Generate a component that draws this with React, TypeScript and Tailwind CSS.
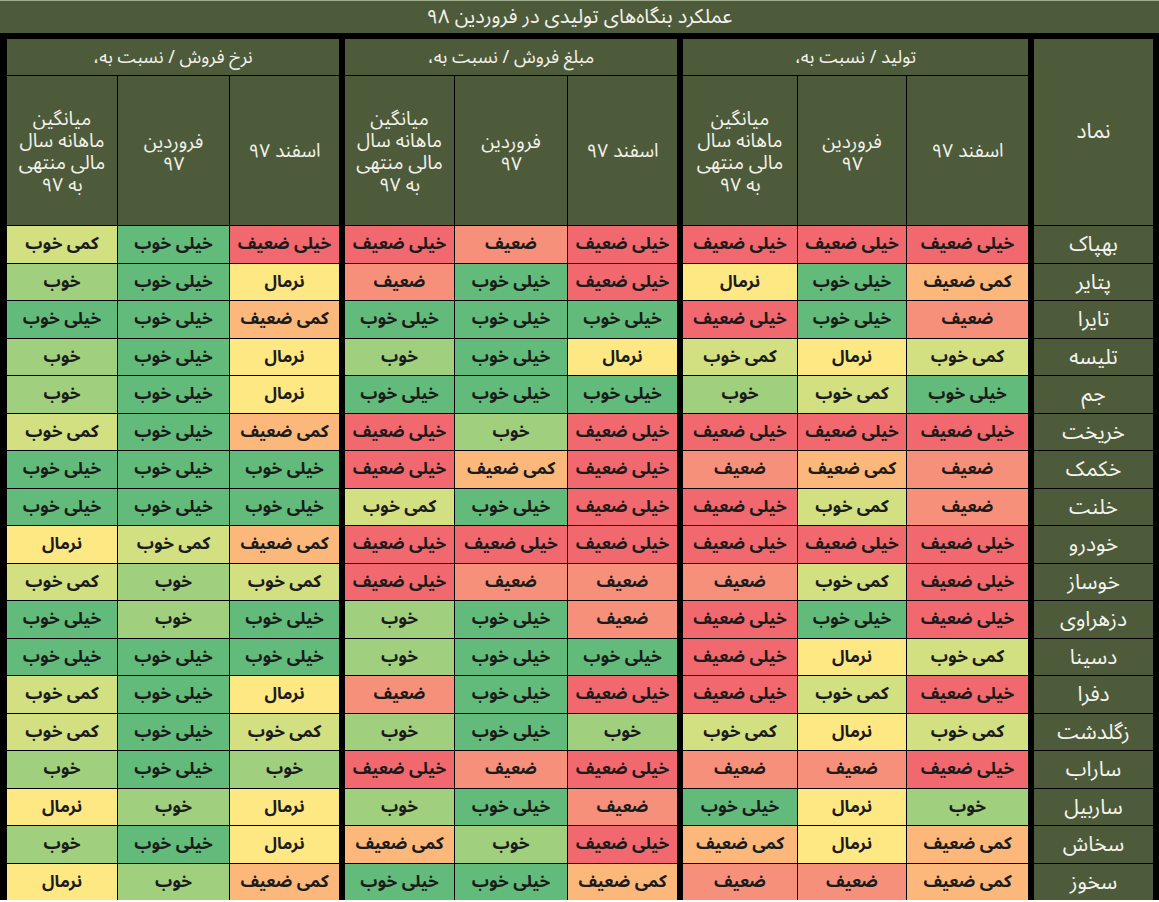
const LEVELS: Record<number, { label: string; bg: string }> = {
  1: { label: 'خیلی ضعیف', bg: 'bg-[#f1696e]' },
  2: { label: 'ضعیف', bg: 'bg-[#f7907a]' },
  3: { label: 'کمی ضعیف', bg: 'bg-[#fbb87a]' },
  4: { label: 'نرمال', bg: 'bg-[#fee883]' },
  5: { label: 'کمی خوب', bg: 'bg-[#d3e082]' },
  6: { label: 'خوب', bg: 'bg-[#a0cf7e]' },
  7: { label: 'خیلی خوب', bg: 'bg-[#62bb7a]' },
};

// values listed right-to-left: تولید (اسفند، فروردین، میانگین)، مبلغ فروش (...)، نرخ فروش (...)
const ROWS: { symbol: string; v: number[] }[] = [
  { symbol: 'بهپاک', v: [1, 1, 1, 1, 2, 1, 1, 7, 5] },
  { symbol: 'پتایر', v: [3, 7, 4, 1, 7, 2, 4, 7, 6] },
  { symbol: 'تایرا', v: [2, 7, 1, 7, 7, 7, 3, 7, 7] },
  { symbol: 'تلیسه', v: [5, 4, 5, 4, 7, 6, 4, 7, 6] },
  { symbol: 'جم', v: [7, 5, 6, 7, 7, 7, 4, 7, 6] },
  { symbol: 'خریخت', v: [1, 1, 1, 1, 6, 1, 3, 7, 5] },
  { symbol: 'خکمک', v: [2, 3, 2, 1, 3, 1, 7, 7, 7] },
  { symbol: 'خلنت', v: [2, 5, 1, 1, 7, 5, 7, 7, 7] },
  { symbol: 'خودرو', v: [1, 1, 1, 1, 1, 1, 3, 5, 4] },
  { symbol: 'خوساز', v: [1, 5, 2, 2, 2, 1, 5, 6, 5] },
  { symbol: 'دزهراوی', v: [1, 7, 1, 2, 7, 6, 7, 6, 7] },
  { symbol: 'دسینا', v: [5, 4, 1, 7, 7, 6, 7, 7, 7] },
  { symbol: 'دفرا', v: [1, 5, 1, 1, 7, 2, 4, 7, 5] },
  { symbol: 'زگلدشت', v: [5, 4, 5, 6, 7, 6, 5, 7, 5] },
  { symbol: 'ساراب', v: [1, 2, 2, 1, 2, 1, 6, 7, 6] },
  { symbol: 'ساربیل', v: [6, 4, 7, 2, 7, 6, 4, 6, 4] },
  { symbol: 'سخاش', v: [3, 4, 3, 1, 6, 3, 4, 7, 6] },
  { symbol: 'سخوز', v: [3, 2, 2, 3, 7, 7, 3, 6, 4] },
];

const GROUPS = ['تولید / نسبت به،', 'مبلغ فروش / نسبت به،', 'نرخ فروش / نسبت به،'];

const FONT = { fontFamily: '"Noto Sans Arabic", "Noto Naskh Arabic", "DejaVu Sans Condensed", "DejaVu Sans", sans-serif' };

function SubHeaders() {
  return (
    <>
      <div className="flex items-center justify-center border-r-[5px] border-black bg-[#4e5b3b] text-[19px] leading-[22px] text-[#f2f2ea]">
        اسفند ۹۷
      </div>
      <div className="flex items-center justify-center bg-[#4e5b3b] pt-[4px] text-center text-[19px] leading-[22px] text-[#f2f2ea]">
        <span>
          فروردین
          <br />
          ۹۷
        </span>
      </div>
      <div className="flex items-center justify-center bg-[#4e5b3b] pt-[2px] text-center text-[19px] leading-[22px] text-[#f2f2ea]">
        <span>
          میانگین
          <br />
          ماهانه سال
          <br />
          مالی منتهی
          <br />
          به ۹۷
        </span>
      </div>
    </>
  );
}

export default function App() {
  return (
    <div dir="rtl" style={FONT} className="w-[1159px] h-[902px] overflow-hidden bg-white">
      <div className="flex h-[33px] items-center justify-center border-t border-[#a3b08f] bg-[#4e5b3b] text-[20px] leading-[24px] text-[#f2f2ea]">
        عملکرد بنگاه‌های تولیدی در فروردین ۹۸
      </div>
      <div className="bg-black pt-[6px] pl-[7px] pr-[6px]">
        <div className="grid grid-cols-[119px_126px_108px_114px_114px_112px_109px_114px_111px_110px] grid-rows-[36px_149px] auto-rows-[36.5px] gap-px">
          <div className="row-span-2 flex items-center justify-center bg-[#4e5b3b] text-[21px] text-[#f2f2ea]">نماد</div>
          {GROUPS.map((g) => (
            <div key={g} className="col-span-3 flex items-center justify-center border-r-[5px] border-black bg-[#4e5b3b] text-[18px] leading-[24px] text-[#f2f2ea]">
              {g}
            </div>
          ))}
          <SubHeaders />
          <SubHeaders />
          <SubHeaders />
          {ROWS.map((r) => (
            <div key={r.symbol} className="contents">
              <div className="flex items-center justify-center bg-[#4e5b3b] text-[21px] leading-[26px] text-[#f4f4ee]">{r.symbol}</div>
              {r.v.map((lv, i) => (
                <div
                  key={i}
                  className={`flex items-center justify-center text-[17px] leading-[24px] font-bold text-[#1b1b1b] ${LEVELS[lv].bg} ${i % 3 === 0 ? 'border-r-[5px] border-black' : ''}`}
                >
                  {LEVELS[lv].label}
                </div>
              ))}
            </div>
          ))}
        </div>
      </div>
    </div>
  );
}
